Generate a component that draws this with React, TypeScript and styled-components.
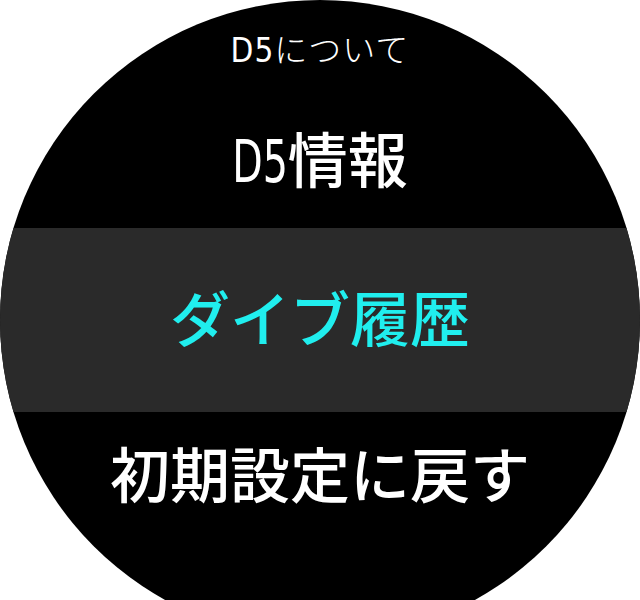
import * as React from "react";
import styled, { createGlobalStyle } from "styled-components";

const GlobalStyle = createGlobalStyle`
  html, body {
    margin: 0;
    padding: 0;
    background: #ffffff;
  }
`;

const JP = `"Noto Sans CJK JP", "Noto Sans", sans-serif`;
const NARROW = `"Liberation Sans Narrow", "DejaVu Sans Condensed", "Liberation Sans", sans-serif`;

const Frame = styled.div`
  width: 640px;
  height: 600px;
  overflow: hidden;
`;

const Watch = styled.div`
  width: 640px;
  height: 640px;
  border-radius: 50%;
  background: #000000;
  overflow: hidden;
  display: flex;
  flex-direction: column;
  font-family: ${JP};
  color: #ffffff;
`;

const Title = styled.div`
  padding-top: 32px;
  height: 33px;
  line-height: 33px;
  font-size: 33px;
  font-weight: 300;
  text-align: center;
  letter-spacing: 1px;
`;

const Item = styled.div<{ $height: number; $top: number; $selected?: boolean }>`
  height: ${p => p.$height}px;
  padding-top: ${p => p.$top}px;
  box-sizing: border-box;
  display: flex;
  justify-content: center;
  align-items: flex-start;
  background: ${p => (p.$selected ? "#2a2a2a" : "transparent")};
`;

const Label = styled.span<{ $selected?: boolean }>`
  font-size: 60px;
  line-height: 60px;
  font-weight: 500;
  white-space: nowrap;
  color: ${p => (p.$selected ? "#20eeee" : "#ffffff")};
`;

const Latin = styled.span<{ $size: number; $stretch: number }>`
  display: inline-block;
  font-family: ${NARROW};
  font-weight: 400;
  font-size: ${p => p.$size}px;
  transform: scaleY(${p => p.$stretch});
  transform-origin: 50% 80%;
`;

const App: React.FC = () => {
  return (
    <>
      <GlobalStyle />
      <Frame>
        <Watch>
          <Title>
            <Latin $size={33} $stretch={1}>
              D5
            </Latin>
            について
          </Title>
          <Item $height={163} $top={62}>
            <Label>
              <Latin $size={44} $stretch={1.34}>
                D5
              </Latin>
              情報
            </Label>
          </Item>
          <Item $height={184} $top={58} $selected>
            <Label $selected>ダイブ履歴</Label>
          </Item>
          <Item $height={120} $top={30}>
            <Label>初期設定に戻す</Label>
          </Item>
        </Watch>
      </Frame>
    </>
  );
};

export default App;
